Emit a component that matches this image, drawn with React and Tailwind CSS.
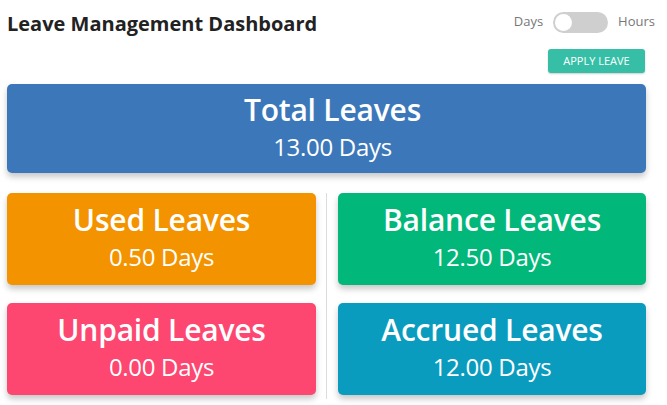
import React from "react";

function Card({ title, value, color, h, extra = "" }) {
  return (
    <div
      className={`${color} ${h} ${extra} rounded-[5px] flex flex-col items-center justify-center text-white shadow-[0_4px_6px_rgba(0,0,0,0.22)]`}
    >
      <div className="text-[30px] font-semibold leading-[36px] tracking-[-0.2px]">{title}</div>
      <div className="text-[24px] leading-[38px] tracking-[-0.3px]">{value}</div>
    </div>
  );
}

export default function App() {
  return (
    <div
      className="w-[667px] h-[405px] overflow-hidden bg-white px-[7px]"
      style={{ fontFamily: '"Open Sans", sans-serif' }}
    >
      <div className="flex justify-between h-[84px]">
        <div className="pt-[10px] text-[20px] font-bold text-[#222] leading-[28px]">
          Leave Management Dashboard
        </div>
        <div className="flex flex-col items-end pt-[11px]">
          <div className="flex items-center h-[22px] text-[13px] text-[#777] mr-[5px]">
            <span>Days</span>
            <div className="mx-[10px] w-[55px] h-[21px] rounded-full bg-[#cfcfcf] relative">
              <div className="absolute left-[2px] top-[2px] w-[17px] h-[17px] rounded-full bg-white" />
            </div>
            <span>Hours</span>
          </div>
          <div className="mt-[16px] mr-[15px] h-[24px] w-[97px] rounded-[3px] bg-[#36bfa6] text-white text-[11px] flex items-center justify-center shadow-[0_1px_2px_rgba(0,0,0,0.2)]">
            APPLY LEAVE
          </div>
        </div>
      </div>
      <div className="w-[639px]">
        <Card title="Total Leaves" value="13.00 Days" color="bg-[#3c78b9]" h="h-[89px]" extra="pl-[12px]" />
      </div>
      <div className="flex w-[639px] mt-[20px]">
        <div className="w-[320px] pr-[10px] border-r border-[#dcdcdc] flex flex-col gap-[18px] pb-[4px]">
          <Card title="Used Leaves" value="0.50 Days" color="bg-[#f39300]" h="h-[92px]" />
          <Card title="Unpaid Leaves" value="0.00 Days" color="bg-[#fd4670]" h="h-[92px]" />
        </div>
        <div className="flex-1 pl-[11px] flex flex-col gap-[18px] pb-[4px]">
          <Card title="Balance Leaves" value="12.50 Days" color="bg-[#02b77a]" h="h-[92px]" />
          <Card title="Accrued Leaves" value="12.00 Days" color="bg-[#0a9cbe]" h="h-[92px]" />
        </div>
      </div>
    </div>
  );
}
